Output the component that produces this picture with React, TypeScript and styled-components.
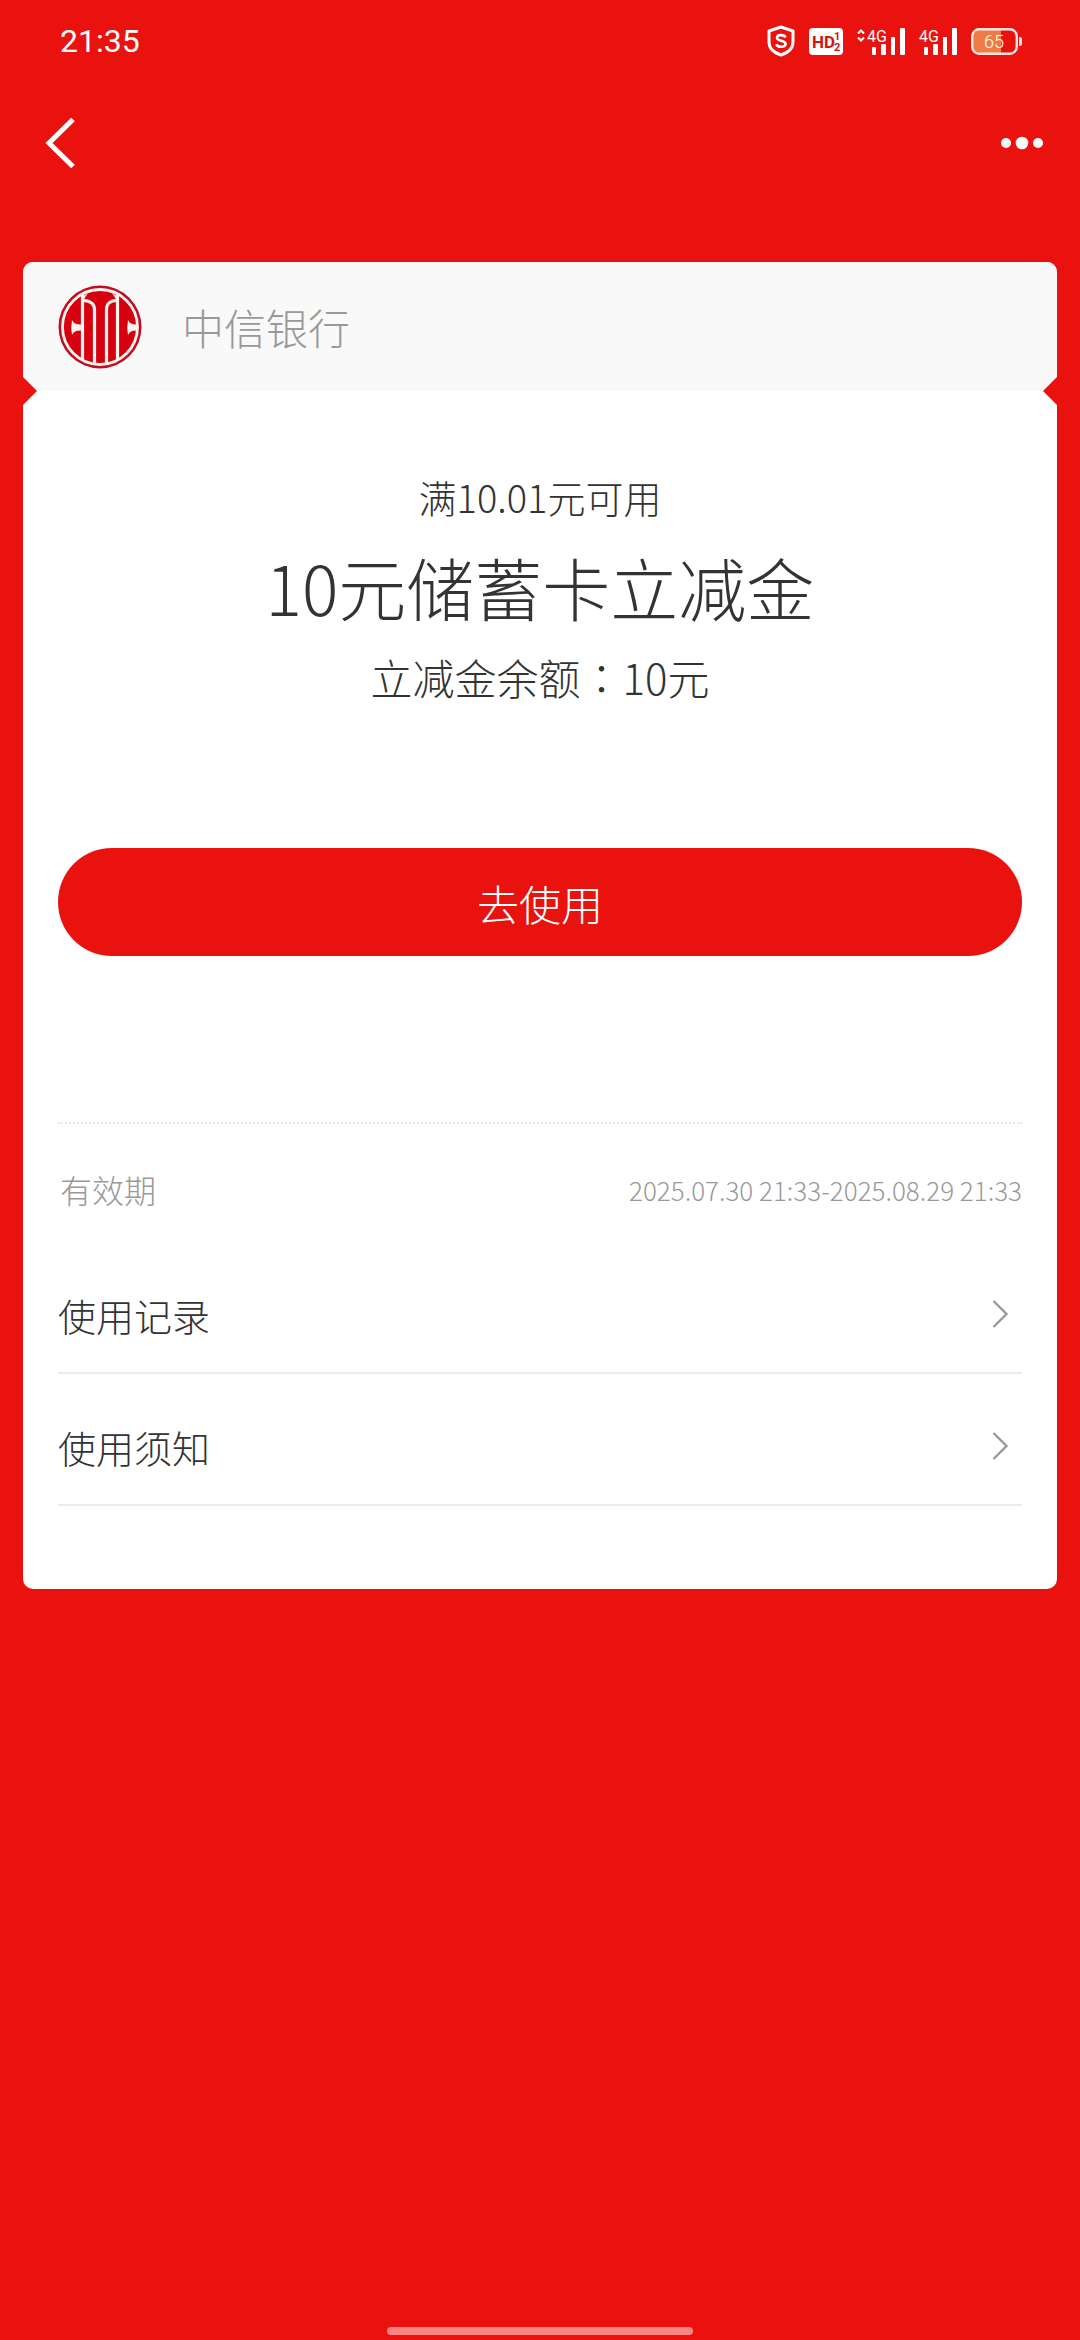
import React from 'react';
import styled, { createGlobalStyle } from 'styled-components';

const RED = '#e9120f';

const GlobalStyle = createGlobalStyle`
  *, *::before, *::after { box-sizing: border-box; }
  body {
    margin: 0;
    background: ${RED};
    font-family: 'Noto Sans CJK SC', 'Noto Sans', sans-serif;
    font-weight: 300;
    color: #333;
  }
  h1, p, ul, dl, dd { margin: 0; padding: 0; font-weight: inherit; }
  button { border: 0; padding: 0; background: none; font: inherit; color: inherit; cursor: pointer; }
  svg { display: block; }
`;

const Page = styled.div`
  min-height: 100vh;
  display: flex;
  flex-direction: column;
  background: ${RED};
`;

const StatusBar = styled.div`
  height: 82px;
  padding: 0 58px 0 60px;
  display: flex;
  align-items: center;
  justify-content: space-between;
  color: #fff;
`;

const Clock = styled.time`
  font-family: Roboto, sans-serif;
  font-weight: 400;
  font-size: 32px;
  line-height: 40px;
`;

const StatusIcons = styled.div`
  display: flex;
  align-items: center;
  gap: 14px;
`;

const NavBar = styled.header`
  height: 122px;
  padding: 0 36px;
  display: flex;
  align-items: center;
  justify-content: space-between;
  color: #fff;
`;

const IconButton = styled.button`
  height: 60px;
  display: flex;
  align-items: center;
`;

const Card = styled.main`
  position: relative;
  margin: 58px 23px 0;
  padding-bottom: 83px;
  border-radius: 10px;
  background: #fff;
`;

const Issuer = styled.div`
  position: relative;
  height: 129px;
  padding: 0 35px;
  display: flex;
  align-items: center;
  gap: 40px;
  border-radius: 10px 10px 0 0;
  background: #f9f9f9;
  color: #999;
  font-size: 42px;
  line-height: 60px;

  &::before, &::after {
    content: '';
    position: absolute;
    bottom: -14px;
    border: 14px solid transparent;
  }
  &::before { left: 0; border-right-width: 0; border-left-color: ${RED}; }
  &::after { right: 0; border-left-width: 0; border-right-color: ${RED}; }
`;

const Summary = styled.section`
  padding: 76px 35px 0;
  display: flex;
  flex-direction: column;
  gap: 10px;
  text-align: center;
`;

const Condition = styled.p`
  font-size: 38px;
  line-height: 60px;
`;

/* The TC face centres the full-width colon in its cell. */
const Balance = styled.p`
  font-family: 'Noto Sans CJK TC', 'Noto Sans CJK SC', sans-serif;
  font-size: 42px;
  line-height: 60px;
`;

const Title = styled.h1`
  font-size: 68px;
  line-height: 100px;
`;

const Action = styled.div`
  padding: 141px 35px 166px;
`;

const UseButton = styled.button`
  width: 100%;
  height: 108px;
  border-radius: 54px;
  background: ${RED};
  color: #fff;
  font-size: 42px;
`;

const Details = styled.section`
  margin: 0 35px;
  border-top: 2px dotted #e8e8e8;
`;

const Validity = styled.dl`
  height: 118px;
  padding: 12px 0 0 2px;
  display: flex;
  align-items: center;
  justify-content: space-between;
  color: #999;

  dt { font-size: 32px; }
  dd { font-size: 26px; }
`;

const Menu = styled.ul`
  list-style: none;
`;

const MenuItem = styled.li`
  border-bottom: 2px solid #ebebeb;
`;

const MenuButton = styled.button`
  width: 100%;
  height: 130px;
  padding: 14px 13px 0 0;
  display: flex;
  align-items: center;
  justify-content: space-between;
  font-size: 38px;
`;

const HomeIndicator = styled.div`
  width: 306px;
  height: 8px;
  margin: auto auto 5px;
  border-radius: 4px;
  background: #fa8583;
`;

const ShieldIcon = () => (
  <svg width="28" height="32" viewBox="0 0 28 32" fill="none" stroke="#fff" strokeLinejoin="round">
    <path d="M14 2 L26 6 V17 C26 24 20 28 14 30 C8 28 2 24 2 17 V6 Z" strokeWidth="3" />
    <path d="M18.5 12.5 C17.5 9.5 10 9 10 12.7 C10 16.8 18.6 14.8 18.6 19 C18.6 22.8 10.5 22.4 9.3 19.2" strokeWidth="2.6" />
  </svg>
);

const HdIcon = () => (
  <svg width="34" height="27" viewBox="0 0 34 27" fill="#d01512">
    <rect width="34" height="27" rx="4" fill="#fff" />
    <text x="3" y="20" fontSize="17" fontWeight="700" fontFamily="'Liberation Sans Narrow', Roboto, sans-serif">HD</text>
    <text x="25" y="12" fontSize="11" fontWeight="700" fontFamily="Roboto, sans-serif">1</text>
    <text x="25" y="23" fontSize="11" fontWeight="700" fontFamily="Roboto, sans-serif">2</text>
  </svg>
);

const SignalIcon = ({ active = false }: { active?: boolean }) => {
  const x = active ? 10 : 0;
  return (
    <svg width={x + 38} height="27" viewBox={`0 0 ${x + 38} 27`} fill="#fff">
      {active && (
        <path d="M1 5.5 L4 2.5 L7 5.5 M1 9.5 L4 12.5 L7 9.5" fill="none" stroke="#fff" strokeWidth="2" />
      )}
      <text x={x} y="14" fontSize="16" fontWeight="400" fontFamily="Roboto, sans-serif">4G</text>
      <rect x={x + 5} y="19" width="4" height="8" rx="1" />
      <rect x={x + 14} y="16" width="5" height="11" rx="1" />
      <rect x={x + 24} y="9" width="4" height="18" rx="1" />
      <rect x={x + 33} y="0" width="5" height="27" rx="1" />
    </svg>
  );
};

const BatteryIcon = () => (
  <svg width="51" height="27" viewBox="0 0 51 27">
    <path d="M8 2 H30 V25 H8 Q2 25 2 19 V8 Q2 2 8 2 Z" fill="#ee7d45" />
    <rect x="1.2" y="1.2" width="44.6" height="24.6" rx="7" fill="none" stroke="#ffe6e0" strokeWidth="2.4" />
    <path d="M48 9 h1 q2 0 2 2 v5 q0 2 -2 2 h-1 z" fill="#ffe6e0" />
    <text x="23" y="20" fontSize="18" textAnchor="middle" fill="#fff" fontFamily="Roboto, sans-serif" fontWeight="300">65</text>
  </svg>
);

const BackIcon = () => (
  <svg width="40" height="50" viewBox="0 0 40 50" fill="none" stroke="#fff" strokeWidth="5">
    <path d="M37 1.5 L13 25 L37 48.5" />
  </svg>
);

const MoreIcon = () => (
  <svg width="44" height="14" viewBox="0 0 44 14" fill="#fff">
    <circle cx="6" cy="7" r="5" />
    <circle cx="22" cy="7" r="6.3" />
    <circle cx="38" cy="7" r="5" />
  </svg>
);

const BankLogo = () => (
  <svg width="84" height="84" viewBox="0 0 84 84" role="img" aria-label="中信银行">
    <circle cx="42" cy="42" r="41.5" fill="#c20d20" />
    <circle cx="42" cy="42" r="37.5" fill="#d7000f" stroke="#fff3f0" strokeWidth="2.8" />
    <g fill="none" stroke="#fff3f0" strokeWidth="3.2">
      <path d="M24.5 10 V74" />
      <path d="M59.5 10 V74" />
      <path d="M26 15.5 C33 16 36.5 19 36.5 25 V79" />
      <path d="M58 15.5 C51 16 48.5 19 48.5 25 V79" />
    </g>
    <path d="M24 12 L30 8 L26 14 Z M60 12 L54 8 L58 14 Z" fill="#fff3f0" />
    <path d="M14 35 C16 39 19 39.5 24 39.5 V45.5 C19 45.5 16 46 14 50 Q12.5 42.5 14 35 Z" fill="#fff3f0" />
    <path d="M70 35 C72 39 75 39.5 79 39.5 V45.5 C75 45.5 72 46 70 50 Q68.5 42.5 70 35 Z" fill="#fff3f0" />
  </svg>
);

const ChevronIcon = () => (
  <svg width="17" height="28" viewBox="0 0 17 28" fill="none" stroke="#999" strokeWidth="2.4">
    <path d="M1.5 1 L14.5 14 L1.5 27" />
  </svg>
);

const menuItems = ['使用记录', '使用须知'];

export default function App() {
  return (
    <Page>
      <GlobalStyle />
      <StatusBar>
        <Clock>21:35</Clock>
        <StatusIcons>
          <ShieldIcon />
          <HdIcon />
          <SignalIcon active />
          <SignalIcon />
          <BatteryIcon />
        </StatusIcons>
      </StatusBar>
      <NavBar>
        <IconButton type="button" aria-label="返回"><BackIcon /></IconButton>
        <IconButton type="button" aria-label="更多"><MoreIcon /></IconButton>
      </NavBar>
      <Card>
        <Issuer>
          <BankLogo />
          <span>中信银行</span>
        </Issuer>
        <Summary>
          <Condition>满10.01元可用</Condition>
          <Title>10元储蓄卡立减金</Title>
          <Balance>立减金余额：10元</Balance>
        </Summary>
        <Action>
          <UseButton type="button">去使用</UseButton>
        </Action>
        <Details>
          <Validity>
            <dt>有效期</dt>
            <dd>2025.07.30 21:33-2025.08.29 21:33</dd>
          </Validity>
          <Menu>
            {menuItems.map((label) => (
              <MenuItem key={label}>
                <MenuButton type="button">
                  <span>{label}</span>
                  <ChevronIcon />
                </MenuButton>
              </MenuItem>
            ))}
          </Menu>
        </Details>
      </Card>
      <HomeIndicator />
    </Page>
  );
}
